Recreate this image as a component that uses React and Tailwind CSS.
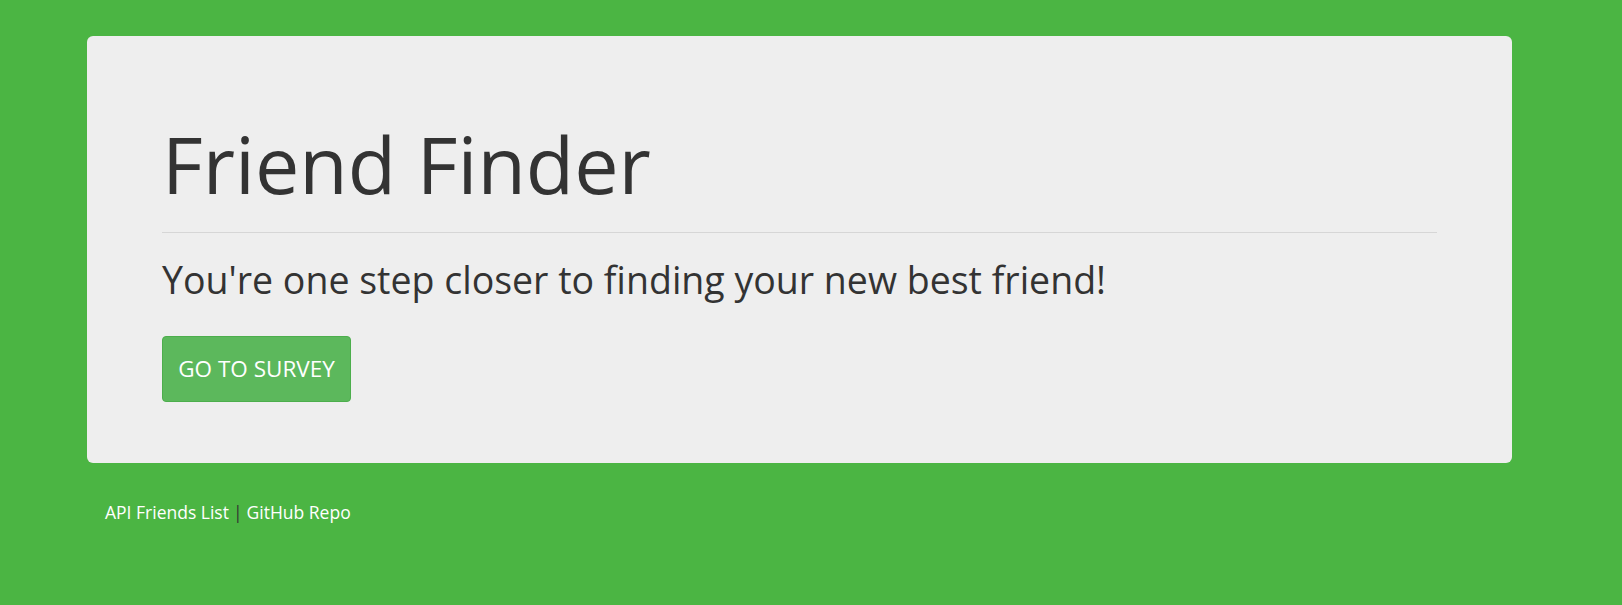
export default function App() {
    return (
        <div className="min-h-[605px] bg-[#4bb543] pt-[36px]" style={{ fontFamily: '"Open Sans", sans-serif' }}>
            <div className="ml-[87px] w-[1425px]">
                <div className="bg-[#eeeeee] rounded-[6px] px-[75px] pt-[80px] pb-[61px]">
                    <h1 className="text-[79px] leading-[96px] text-[#333333] font-normal">Friend Finder</h1>
                    <hr className="mt-[20px] border-0 border-t border-[#d6d6d6]" />
                    <p className="mt-[20px] text-[37.5px] leading-[54px] text-[#333333]">
                        You're one step closer to finding your new best friend!
                    </p>
                    <a
                        href="#"
                        className="mt-[29px] inline-flex items-center justify-center h-[66px] w-[189px] bg-[#5cb85c] border border-[#4cae4c] rounded-[4px] text-white text-[22.5px]"
                    >
                        GO TO SURVEY
                    </a>
                </div>
                <div className="mt-[36px] pl-[18px] text-[17.5px] leading-[27px] text-white">
                    <a href="#">API Friends List</a>
                    <span className="text-[#333333] mx-[4px]">|</span>
                    <a href="#">GitHub Repo</a>
                </div>
            </div>
        </div>
    );
}
